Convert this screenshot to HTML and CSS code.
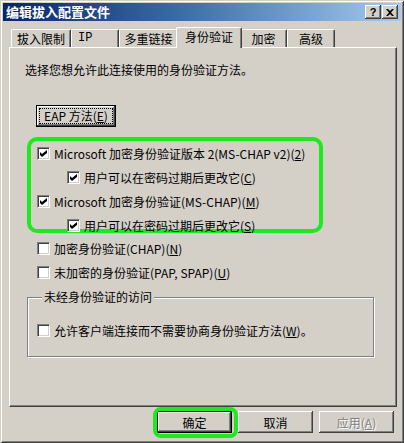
FILE: index.html
```html
<!DOCTYPE html>
<html lang="zh-CN">
<head>
    <meta charset="UTF-8">
    <title>编辑拔入配置文件</title>
    <link rel="stylesheet" href="styles.css">
</head>
<body>

    <div class="window">
        <div class="titlebar">
            <span class="title">编辑拔入配置文件</span>
            <div class="caption">
                <span class="cap-btn help">?</span>
                <span class="cap-btn">
                    <svg width="8" height="7" viewBox="0 0 8 7"><path d="M0 0h2l2 2 2-2h2L5 3.5 8 7H6L4 5 2 7H0l3-3.5z" fill="#000"/></svg>
                </span>
            </div>
        </div>

        <div class="content">
            <div class="tabs">
                <div class="tab w60">拔入限制</div>
                <div class="tab w48 latin">IP</div>
                <div class="tab w59">多重链接</div>
                <div class="tab selected">身份验证</div>
                <div class="tab w47">加密</div>
                <div class="tab w48">高级</div>
            </div>

            <div class="panel">
                <p class="intro">选择您想允许此连接使用的身份验证方法。</p>

                <button class="btn eap"><span class="focus">EAP 方法(<u>E</u>)</span></button>

                <div class="highlight">
                    <div class="row"><span class="box checked"></span>Microsoft 加密身份验证版本 2(MS-CHAP v2)(<u>2</u>)</div>
                    <div class="row indent"><span class="box checked"></span>用户可以在密码过期后更改它(<u>C</u>)</div>
                    <div class="row"><span class="box checked"></span>Microsoft 加密身份验证(MS-CHAP)(<u>M</u>)</div>
                    <div class="row indent"><span class="box checked"></span>用户可以在密码过期后更改它(<u>S</u>)</div>
                </div>

                <div class="row outer first"><span class="box"></span>加密身份验证(CHAP)(<u>N</u>)</div>
                <div class="row outer"><span class="box"></span>未加密的身份验证(PAP, SPAP)(<u>U</u>)</div>

                <fieldset class="group">
                    <legend>未经身份验证的访问</legend>
                    <div class="row"><span class="box"></span>允许客户端连接而不需要协商身份验证方法(<u>W</u>)。</div>
                </fieldset>
            </div>

            <div class="actions">
                <span class="ring"><button class="btn default">确定</button></span>
                <button class="btn">取消</button>
                <button class="btn" disabled>应用(<u>A</u>)</button>
            </div>
        </div>
    </div>

</body>
</html>
```

FILE: styles.css
```css
* {
    box-sizing: border-box;
}

body {
    margin: 0;
    font-family: "Noto Sans CJK SC", "Noto Sans", sans-serif;
    font-size: 12px;
    color: #000;
    background: #d4d0c8;
}

.window {
    width: 404px;
    height: 443px;
    padding: 3px;
    background: #d4d0c8;
    box-shadow: inset 1px 1px #d4d0c8, inset -1px -1px #404040,
                inset 2px 2px #fff, inset -2px -2px #808080;
}

/* title bar */
.titlebar {
    height: 18px;
    display: flex;
    align-items: center;
    justify-content: space-between;
    padding: 0 3px 0 3px;
    background: linear-gradient(to right, #0a246a, #3a6ea5 45%, #a6caf0);
}

.title {
    color: #fff;
    font-weight: bold;
    font-size: 13px;
    line-height: 18px;
}

.caption {
    display: flex;
    gap: 1px;
}

.cap-btn {
    width: 16px;
    height: 14px;
    display: flex;
    align-items: center;
    justify-content: center;
    background: #d4d0c8;
    box-shadow: inset -1px -1px #404040, inset 1px 1px #fff, inset -2px -2px #808080;
}

.help {
    font-family: "Liberation Sans", sans-serif;
    font-weight: bold;
    font-size: 11px;
    line-height: 12px;
}

/* tabs */
.content {
    padding: 6px 4px 0 6px;
}

.tabs {
    display: flex;
    align-items: flex-end;
    height: 20px;
    margin-left: 2px;
    position: relative;
    z-index: 1;
}

.tab {
    height: 18px;
    line-height: 17px;
    text-align: center;
    background: #d4d0c8;
    border-top: 1px solid #fff;
    border-left: 1px solid #fff;
    border-right: 1px solid #404040;
    border-radius: 2px 2px 0 0;
    box-shadow: inset -1px 0 #808080;
}

.w60 { width: 60px; }
.w59 { width: 59px; }
.w48 { width: 48px; }
.w47 { width: 47px; }

.latin {
    text-align: left;
    padding-left: 6px;
    font-family: "Liberation Mono", monospace;
}

.tab.selected {
    width: 66px;
    height: 21px;
    line-height: 18px;
    margin: 0 -2px -1px;
    position: relative;
    z-index: 2;
}

/* panel */
.panel {
    height: 360px;
    border-top: 1px solid #fff;
    border-left: 1px solid #fff;
    border-right: 1px solid #404040;
    border-bottom: 1px solid #404040;
    box-shadow: inset -1px -1px #808080;
}

.intro {
    margin: 15px 0 0 15px;
    line-height: 14px;
}

.btn {
    width: 75px;
    height: 22px;
    padding: 0;
    font-family: inherit;
    font-size: 12px;
    color: #000;
    background: #d4d0c8;
    border: none;
    border-radius: 0;
    box-shadow: inset -1px -1px #404040, inset 1px 1px #fff, inset -2px -2px #808080;
}

.btn.default,
.btn.eap {
    border: 1px solid #000;
}

.btn.eap {
    display: block;
    width: 80px;
    margin: 28px 0 0 26px;
}

.focus {
    display: block;
    margin: 0 3px;
    line-height: 14px;
    outline: 1px dotted #000;
}

.btn:disabled {
    color: #808080;
    text-shadow: 1px 1px #fff;
}

/* checkbox rows */
.row {
    height: 24px;
    display: flex;
    align-items: center;
    white-space: nowrap;
}

.box {
    width: 13px;
    height: 13px;
    margin-right: 4px;
    flex: none;
    background: #fff;
    border: 1px solid;
    border-color: #808080 #fff #fff #808080;
    box-shadow: inset 1px 1px #404040, inset -1px -1px #d4d0c8;
}

.box.checked {
    background: #fff url("data:image/svg+xml,%3Csvg xmlns='http://www.w3.org/2000/svg' width='7' height='7'%3E%3Cpath d='M0 2l2 2 5-4v3L2 7 0 5z' fill='%23000'/%3E%3C/svg%3E") no-repeat 2px 2px;
}

.highlight {
    width: 296px;
    height: 96px;
    margin: 10px 0 0 17px;
    border: 4px solid #1ee81e;
    border-radius: 10px;
}

.highlight .row {
    padding-left: 6px;
}

.highlight .row.indent {
    padding-left: 36px;
}

.row.outer {
    padding-left: 27px;
}

.row.outer.first {
    margin-top: 3px;
}

.group {
    width: 347px;
    height: 67px;
    margin: 6px 0 0 17px;
    padding: 14px 0 0 9px;
    border: 1px solid #808080;
    box-shadow: 1px 1px #fff, inset 1px 1px #fff;
}

.group legend {
    margin-left: 5px;
    padding: 0 2px;
    line-height: 14px;
    background: #d4d0c8;
    position: relative;
}

/* dialog buttons */
.actions {
    display: flex;
    justify-content: flex-end;
    gap: 6px;
    margin: 4px 3px 0 0;
}

.ring {
    position: relative;
    display: flex;
}

.ring::after {
    content: "";
    position: absolute;
    top: -4px;
    left: -4px;
    right: -6px;
    bottom: -5px;
    border: 4px solid #1ee81e;
    border-radius: 8px;
}
```
